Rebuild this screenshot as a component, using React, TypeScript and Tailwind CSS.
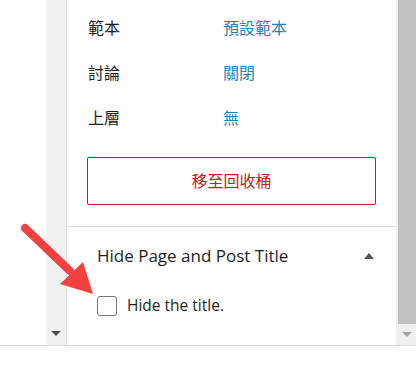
import React from "react";

const rows = [
  { label: "範本", value: "預設範本" },
  { label: "討論", value: "關閉" },
  { label: "上層", value: "無" },
];

export default function App() {
  return (
    <div
      className="relative w-[416px] h-[374px] bg-white flex flex-col overflow-hidden text-[#1e1e1e]"
      style={{ fontFamily: '"Open Sans", "Noto Sans CJK TC", sans-serif' }}
    >
      <div className="flex h-[345px]">
        {/* page area */}
        <div className="w-[46px] bg-white" />

        {/* left scrollbar */}
        <div className="w-[20px] bg-[#f1f1f1] flex flex-col justify-end items-center pb-[9px]">
          <div className="w-0 h-0 border-l-[5px] border-r-[5px] border-t-[5px] border-l-transparent border-r-transparent border-t-[#505050]" />
        </div>

        {/* sidebar panel */}
        <div className="flex-1 border-l border-[#e0e0e0] flex flex-col">
          <div className="px-[20px] pt-[5px] pb-[21px]">
            {rows.map((r) => (
              <div key={r.label} className="grid grid-cols-[136px_1fr] h-[45px] items-center text-[16px]">
                <span className="pl-[1px]">{r.label}</span>
                <span className="text-[#2384b5]">{r.value}</span>
              </div>
            ))}
            <button className="mt-[17px] w-full h-[48px] border border-[#cc1818] rounded-[2px] text-[#cc1818] text-[16px] flex items-center justify-center">
              移至回收桶
            </button>
          </div>

          <div className="border-t border-[#e0e0e0] flex-1 px-[30px] pt-[18px]">
            <div className="flex items-center justify-between h-[22px]">
              <span className="text-[17px] font-medium">Hide Page and Post Title</span>
              <div className="mr-[-8px] w-0 h-0 border-l-[5px] border-r-[5px] border-b-[6px] border-l-transparent border-r-transparent border-b-[#555]" />
            </div>
            <label className="mt-[27px] flex items-center gap-[10px] text-[15.5px]">
              <span className="w-[20px] h-[20px] rounded-[3px] border border-[#757575] bg-white" />
              <span>Hide the title.</span>
            </label>
          </div>
        </div>

        {/* right scrollbar */}
        <div className="w-[20px] bg-[#f0f0f0] flex flex-col">
          <div className="ml-[2px] h-[324px] bg-[#c1c1c1]" />
          <div className="flex-1 flex items-center justify-center pl-[2px]">
            <div className="w-0 h-0 border-l-[5px] border-r-[5px] border-t-[5px] border-l-transparent border-r-transparent border-t-[#a3a3a3]" />
          </div>
        </div>
      </div>

      <div className="flex-1 border-t border-[#dcdcdc] bg-white" />

      {/* annotation arrow */}
      <svg className="absolute left-0 top-0 pointer-events-none" width="416" height="374" viewBox="0 0 416 374">
        <line x1="25" y1="228" x2="70" y2="271" stroke="#f24141" strokeWidth="8" strokeLinecap="round" />
        <polygon points="60,284 83,262 93,294" fill="#f24141" />
      </svg>
    </div>
  );
}
